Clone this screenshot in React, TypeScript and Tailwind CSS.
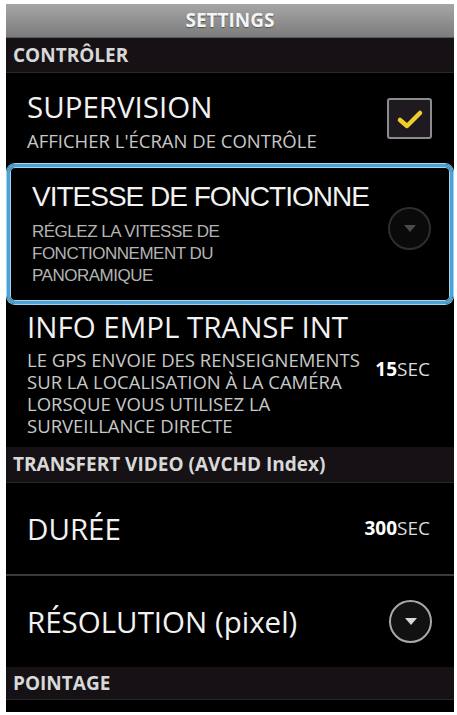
import React from 'react';

// Settings screen: section headers, rows with checkbox / dropdown / value
const sans = { fontFamily: '"Open Sans", "Noto Sans", sans-serif' };
const arial = { fontFamily: '"Liberation Sans", Arial, sans-serif' };

function SectionHeader({ label, h }: { label: string; h: string }) {
  return (
    <div className={`flex items-center ${h} bg-[#151115] border-b border-[#2a262a] pl-[7px]`}>
      <span className="text-[19px] font-bold text-[#d8d8d8] leading-none" style={sans}>
        {label}
      </span>
    </div>
  );
}

function Checkbox() {
  return (
    <div className="w-[45px] h-[41px] rounded-[3px] border-2 border-[#8c8c8c] bg-[#1f1a20] flex items-center justify-center">
      <svg width="28" height="22" viewBox="0 0 28 22">
        <path d="M4 12 L11 18 L24 5" fill="none" stroke="#f0cc2e" strokeWidth="4.5" strokeLinecap="round" strokeLinejoin="round" />
      </svg>
    </div>
  );
}

function DropCircle({ dim }: { dim?: boolean }) {
  return (
    <div
      className={`w-[43px] h-[43px] rounded-full border-2 flex items-center justify-center ${
        dim ? 'border-[#2e2e2e] bg-[#0a0a0a]' : 'border-[#a8a8a8] bg-[#111]'
      }`}
    >
      <svg width="12" height="8" viewBox="0 0 12 8">
        <path d="M0 0 L12 0 L6 7 Z" fill={dim ? '#4a4a4a' : '#d8d8d8'} />
      </svg>
    </div>
  );
}

function Value({ num }: { num: string }) {
  return (
    <span className="text-[19px] text-[#dcdcdc] leading-none" style={sans}>
      <span className="font-bold text-white">{num}</span>SEC
    </span>
  );
}

export default function App() {
  return (
    <div className="w-[457px] h-[715px] bg-white pt-[4px] pl-[6px]">
      <div className="w-[448px] h-[708px] bg-black flex flex-col overflow-hidden">
        {/* header */}
        <div className="h-[34px] shrink-0 flex items-center justify-center bg-gradient-to-b from-[#a6a6a6] to-[#7c7c7c] border-b border-[#5a5a5a]">
          <span
            className="text-[19px] font-bold text-[#f4f4f4] leading-none [text-shadow:0_1px_1px_#555]"
            style={sans}
          >
            SETTINGS
          </span>
        </div>

        <SectionHeader label="CONTRÔLER" h="h-[35px]" />

        {/* SUPERVISION */}
        <div className="h-[91px] shrink-0 flex items-center justify-between pl-[21px] pr-[22px]">
          <div className="flex flex-col mt-[7px]">
            <span className="text-[29.5px] text-[#f2f2f2] leading-[32px]" style={sans}>
              SUPERVISION
            </span>
            <span className="text-[18.5px] text-[#c8c8c8] leading-[24px] mt-[6px]" style={sans}>
              AFFICHER L'ÉCRAN DE CONTRÔLE
            </span>
          </div>
          <Checkbox />
        </div>

        {/* VITESSE (selected) */}
        <div className="mx-[1px] h-[140px] shrink-0 rounded-[8px] border-[3px] border-[#4aa2d6] shadow-[0_0_0_1px_#a6d2ee,inset_0_0_0_1px_#a6d2ee] flex items-center justify-between pl-[22px] pr-[19px]">
          <div className="flex flex-col">
            <span className="text-[28px] tracking-[-1px] text-[#f2f2f2] leading-[32px]" style={arial}>
              VITESSE DE FONCTIONNE
            </span>
            <span className="text-[17px] tracking-[-0.5px] text-[#b4b4b4] leading-[22px] mt-[8px]" style={arial}>
              RÉGLEZ LA VITESSE DE
              <br />
              FONCTIONNEMENT DU
              <br />
              PANORAMIQUE
            </span>
          </div>
          <div className="self-start mt-[40px]">
            <DropCircle dim />
          </div>
        </div>

        {/* INFO EMPL */}
        <div className="h-[143px] shrink-0 flex flex-col justify-center pl-[21px] pr-[24px]">
          <span className="text-[29.5px] text-[#f2f2f2] leading-[32px] -mt-[4px]" style={sans}>
            INFO EMPL TRANSF INT
          </span>
          <div className="flex items-center justify-between mt-[6px]">
            <div className="flex flex-col text-[18.5px] text-[#c8c8c8] leading-[22px]" style={sans}>
              <span>LE GPS ENVOIE DES RENSEIGNEMENTS</span>
              <span>SUR LA LOCALISATION À LA CAMÉRA</span>
              <span>LORSQUE VOUS UTILISEZ LA</span>
              <span>SURVEILLANCE DIRECTE</span>
            </div>
            <div className="self-start mt-[9px]">
              <Value num="15" />
            </div>
          </div>
        </div>

        <SectionHeader label="TRANSFERT VIDEO (AVCHD Index)" h="h-[36px]" />

        {/* DURÉE */}
        <div className="h-[93px] shrink-0 flex items-center justify-between pl-[21px] pr-[24px] border-b-2 border-[#3a3a3a]">
          <span className="text-[29.5px] text-[#f2f2f2] leading-[32px]" style={sans}>
            DURÉE
          </span>
          <Value num="300" />
        </div>

        {/* RÉSOLUTION */}
        <div className="h-[91px] shrink-0 flex items-center justify-between pl-[21px] pr-[22px]">
          <span className="text-[29.5px] text-[#f2f2f2] leading-[32px]" style={sans}>
            RÉSOLUTION (pixel)
          </span>
          <DropCircle />
        </div>

        <SectionHeader label="POINTAGE" h="h-[33px]" />
      </div>
    </div>
  );
}
